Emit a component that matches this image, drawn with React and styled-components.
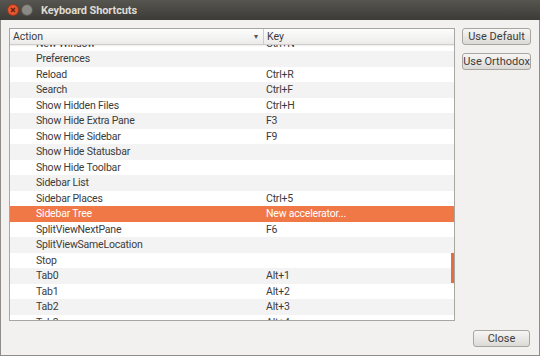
import styled, { createGlobalStyle } from "styled-components";

const GlobalStyle = createGlobalStyle`
  html, body { margin: 0; padding: 0; }
  body {
    width: 540px;
    height: 356px;
    overflow: hidden;
    font-family: Roboto, "Open Sans", sans-serif;
  }
`;

const rows = [
  ["New Window", "Ctrl+N"],
  ["Preferences", ""],
  ["Reload", "Ctrl+R"],
  ["Search", "Ctrl+F"],
  ["Show Hidden Files", "Ctrl+H"],
  ["Show Hide Extra Pane", "F3"],
  ["Show Hide Sidebar", "F9"],
  ["Show Hide Statusbar", ""],
  ["Show Hide Toolbar", ""],
  ["Sidebar List", ""],
  ["Sidebar Places", "Ctrl+5"],
  ["Sidebar Tree", "New accelerator..."],
  ["SplitViewNextPane", "F6"],
  ["SplitViewSameLocation", ""],
  ["Stop", ""],
  ["Tab0", "Alt+1"],
  ["Tab1", "Alt+2"],
  ["Tab2", "Alt+3"],
  ["Tab3", "Alt+4"],
];

const SELECTED = 11;

const App = () => {
  return (
    <>
      <GlobalStyle />
      <Window>
        <TitleBar>
          <WinButton color="#e9562f">
            <svg width="6" height="6" viewBox="0 0 6 6">
              <path d="M1 1L5 5M5 1L1 5" stroke="#5a2414" strokeWidth="1.3" />
            </svg>
          </WinButton>
          <WinButton color="#8c8a84" />
          <Title>Keyboard Shortcuts</Title>
        </TitleBar>
        <Body>
          <Main>
            <Table>
              <Header>
                <HeadCell width="254px">
                  Action
                  <SortArrow>▾</SortArrow>
                </HeadCell>
                <HeadCell>Key</HeadCell>
              </Header>
              <Viewport>
                <RowList>
                  {rows.map(([action, key], i) => (
                    <Row key={action} $striped={i % 2 === 1} $selected={i === SELECTED}>
                      <ActionCell>{action}</ActionCell>
                      <KeyCell>{key}</KeyCell>
                    </Row>
                  ))}
                </RowList>
                <ScrollMark />
              </Viewport>
            </Table>
            <SideButtons>
              <Button>Use Default</Button>
              <Button>Use Orthodox</Button>
            </SideButtons>
          </Main>
          <Footer>
            <Button $wide>Close</Button>
          </Footer>
        </Body>
      </Window>
    </>
  );
};

export default App;

const Window = styled.div`
  width: 540px;
  height: 356px;
  box-sizing: border-box;
  display: flex;
  flex-direction: column;
  background: #f2f1f0;
  border: 1px solid #8e8c87;
  border-top: none;
`;

const TitleBar = styled.div`
  height: 20px;
  flex-shrink: 0;
  display: flex;
  align-items: center;
  padding-left: 7px;
  gap: 2px;
  background: linear-gradient(#56554f, #3c3b37);
  margin: 0 -1px;
`;

const WinButton = styled.div`
  width: 10px;
  height: 10px;
  border-radius: 50%;
  background: ${({ color }) => color};
  border: 1px solid rgba(0, 0, 0, 0.35);
  display: flex;
  align-items: center;
  justify-content: center;
`;

const Title = styled.span`
  margin-left: 6px;
  color: #dfdbd2;
  font-size: 11px;
  font-weight: bold;
  letter-spacing: -0.1px;
`;

const Body = styled.div`
  flex: 1;
  display: flex;
  flex-direction: column;
  padding: 8px;
`;

const Main = styled.div`
  display: flex;
  gap: 7px;
`;

const Table = styled.div`
  width: 446px;
  height: 293px;
  flex-shrink: 0;
  box-sizing: border-box;
  border: 1px solid #a8a6a1;
  background: #ffffff;
  display: flex;
  flex-direction: column;
  overflow: hidden;
`;

const Header = styled.div`
  height: 15px;
  flex-shrink: 0;
  display: flex;
  background: linear-gradient(#fdfdfd, #ecebea);
  border-bottom: 1px solid #cfcdca;
  position: relative;
  z-index: 1;
  box-shadow: 0 1px 1px rgba(0, 0, 0, 0.06);
`;

const HeadCell = styled.div`
  width: ${({ width }) => width || "auto"};
  flex: ${({ width }) => (width ? "none" : 1)};
  box-sizing: border-box;
  display: flex;
  align-items: center;
  padding-left: 3px;
  font-size: 10.5px;
  color: #3c3c3c;
  border-right: 1px solid #cfcdca;
  &:last-child { border-right: none; }
`;

const SortArrow = styled.span`
  margin-left: auto;
  margin-right: 5px;
  font-size: 8px;
  color: #555;
`;

const Viewport = styled.div`
  flex: 1;
  position: relative;
  overflow: hidden;
`;

const RowList = styled.div`
  margin-top: -9.5px;
`;

const Row = styled.div`
  height: 15.5px;
  display: flex;
  align-items: center;
  font-size: 10.5px;
  letter-spacing: -0.2px;
  color: ${({ $selected }) => ($selected ? "#ffffff" : "#3c3c3c")};
  background: ${({ $selected, $striped }) =>
    $selected ? "#f07746" : $striped ? "#f3f3f3" : "#ffffff"};
`;

const ActionCell = styled.div`
  width: 254px;
  padding-left: 26px;
  box-sizing: border-box;
  white-space: nowrap;
`;

const KeyCell = styled.div`
  padding-left: 2px;
  white-space: nowrap;
`;

const ScrollMark = styled.div`
  position: absolute;
  right: 0;
  top: 208px;
  width: 3px;
  height: 30px;
  background: #e46f3e;
`;

const SideButtons = styled.div`
  display: flex;
  flex-direction: column;
  gap: 8px;
`;

const Button = styled.button`
  height: 17px;
  padding: 0;
  width: ${({ $wide }) => ($wide ? "57px" : "69px")};
  box-sizing: border-box;
  font-family: Roboto, "Open Sans", sans-serif;
  font-size: 11px;
  color: #3c3c3c;
  background: linear-gradient(#f7f6f5, #dcdad6);
  border: 1px solid #a9a69f;
  border-radius: 3px;
  cursor: pointer;
  white-space: nowrap;
`;

const Footer = styled.div`
  margin-top: auto;
  display: flex;
  justify-content: flex-end;
  padding-right: 1px;
`;
